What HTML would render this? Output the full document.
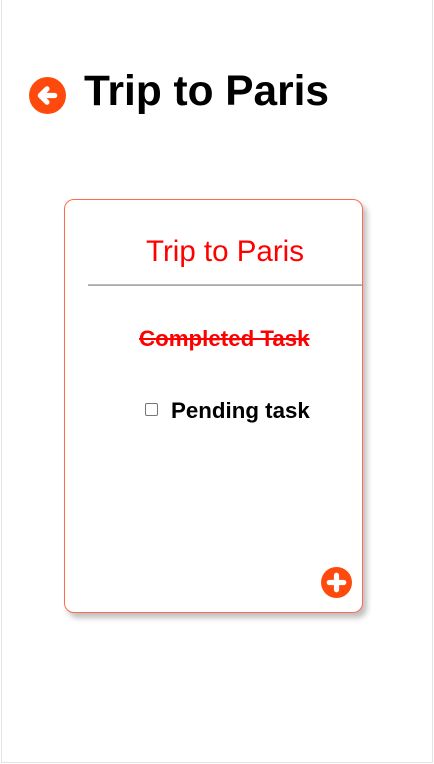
<!DOCTYPE html>
<html><head><style>
html,body{margin:0;padding:0;background:#fff;}
body{width:434px;height:764px;position:relative;overflow:hidden;font-family:"Liberation Sans",Arial,sans-serif;}
.frame{position:absolute;left:1px;top:0;width:430px;height:762px;border:1px solid #e3e3e3;border-top:none;}
h1{position:absolute;left:84px;top:66px;margin:0;font-size:42.4px;font-weight:bold;line-height:50px;color:#000;}
.back{position:absolute;left:29px;top:77px;}
.card{position:absolute;left:64px;top:199px;width:297px;height:412px;border:1px solid #ff6a4d;border-radius:10px;box-shadow:4px 5px 6px rgba(0,0,0,0.25);background:#fff;}
.ct{position:absolute;width:320px;top:235px;text-align:center;font-size:29.5px;color:#f00;line-height:34px;left:65px;}
.hr{position:absolute;left:88px;top:284px;width:274px;height:1px;background:#aaa;border-top:1px solid #bbb;}
.done{position:absolute;left:139px;top:326px;font-size:22.3px;font-weight:bold;color:#f00;text-decoration:line-through;line-height:26px;}
.cb{position:absolute;left:145px;top:403px;width:11px;height:11px;border:1px solid #767676;border-radius:2px;}
.pend{position:absolute;left:171px;top:398px;font-size:22.3px;font-weight:bold;color:#000;line-height:26px;}
.plus{position:absolute;left:321px;top:567px;}
</style></head><body>
<div class="frame"></div>
<svg class="back" width="37" height="37" viewBox="0 0 36 36"><circle cx="18" cy="18" r="18" fill="#ff4a0d"/><path d="M25 18H11M17.5 11.5L11 18l6.5 6.5" stroke="#fff" stroke-width="5" fill="none" stroke-linecap="round" stroke-linejoin="round"/></svg>
<h1>Trip to Paris</h1>
<div class="card"></div>
<div class="ct">Trip to Paris</div>
<div class="hr"></div>
<div class="done">Completed Task</div>
<div class="cb"></div>
<div class="pend">Pending task</div>
<svg class="plus" width="31" height="31" viewBox="0 0 30 30"><circle cx="15" cy="15" r="15" fill="#ff4a0d"/><path d="M15 8v14M8 15h14" stroke="#fff" stroke-width="5" stroke-linecap="round"/></svg>
</body></html>
